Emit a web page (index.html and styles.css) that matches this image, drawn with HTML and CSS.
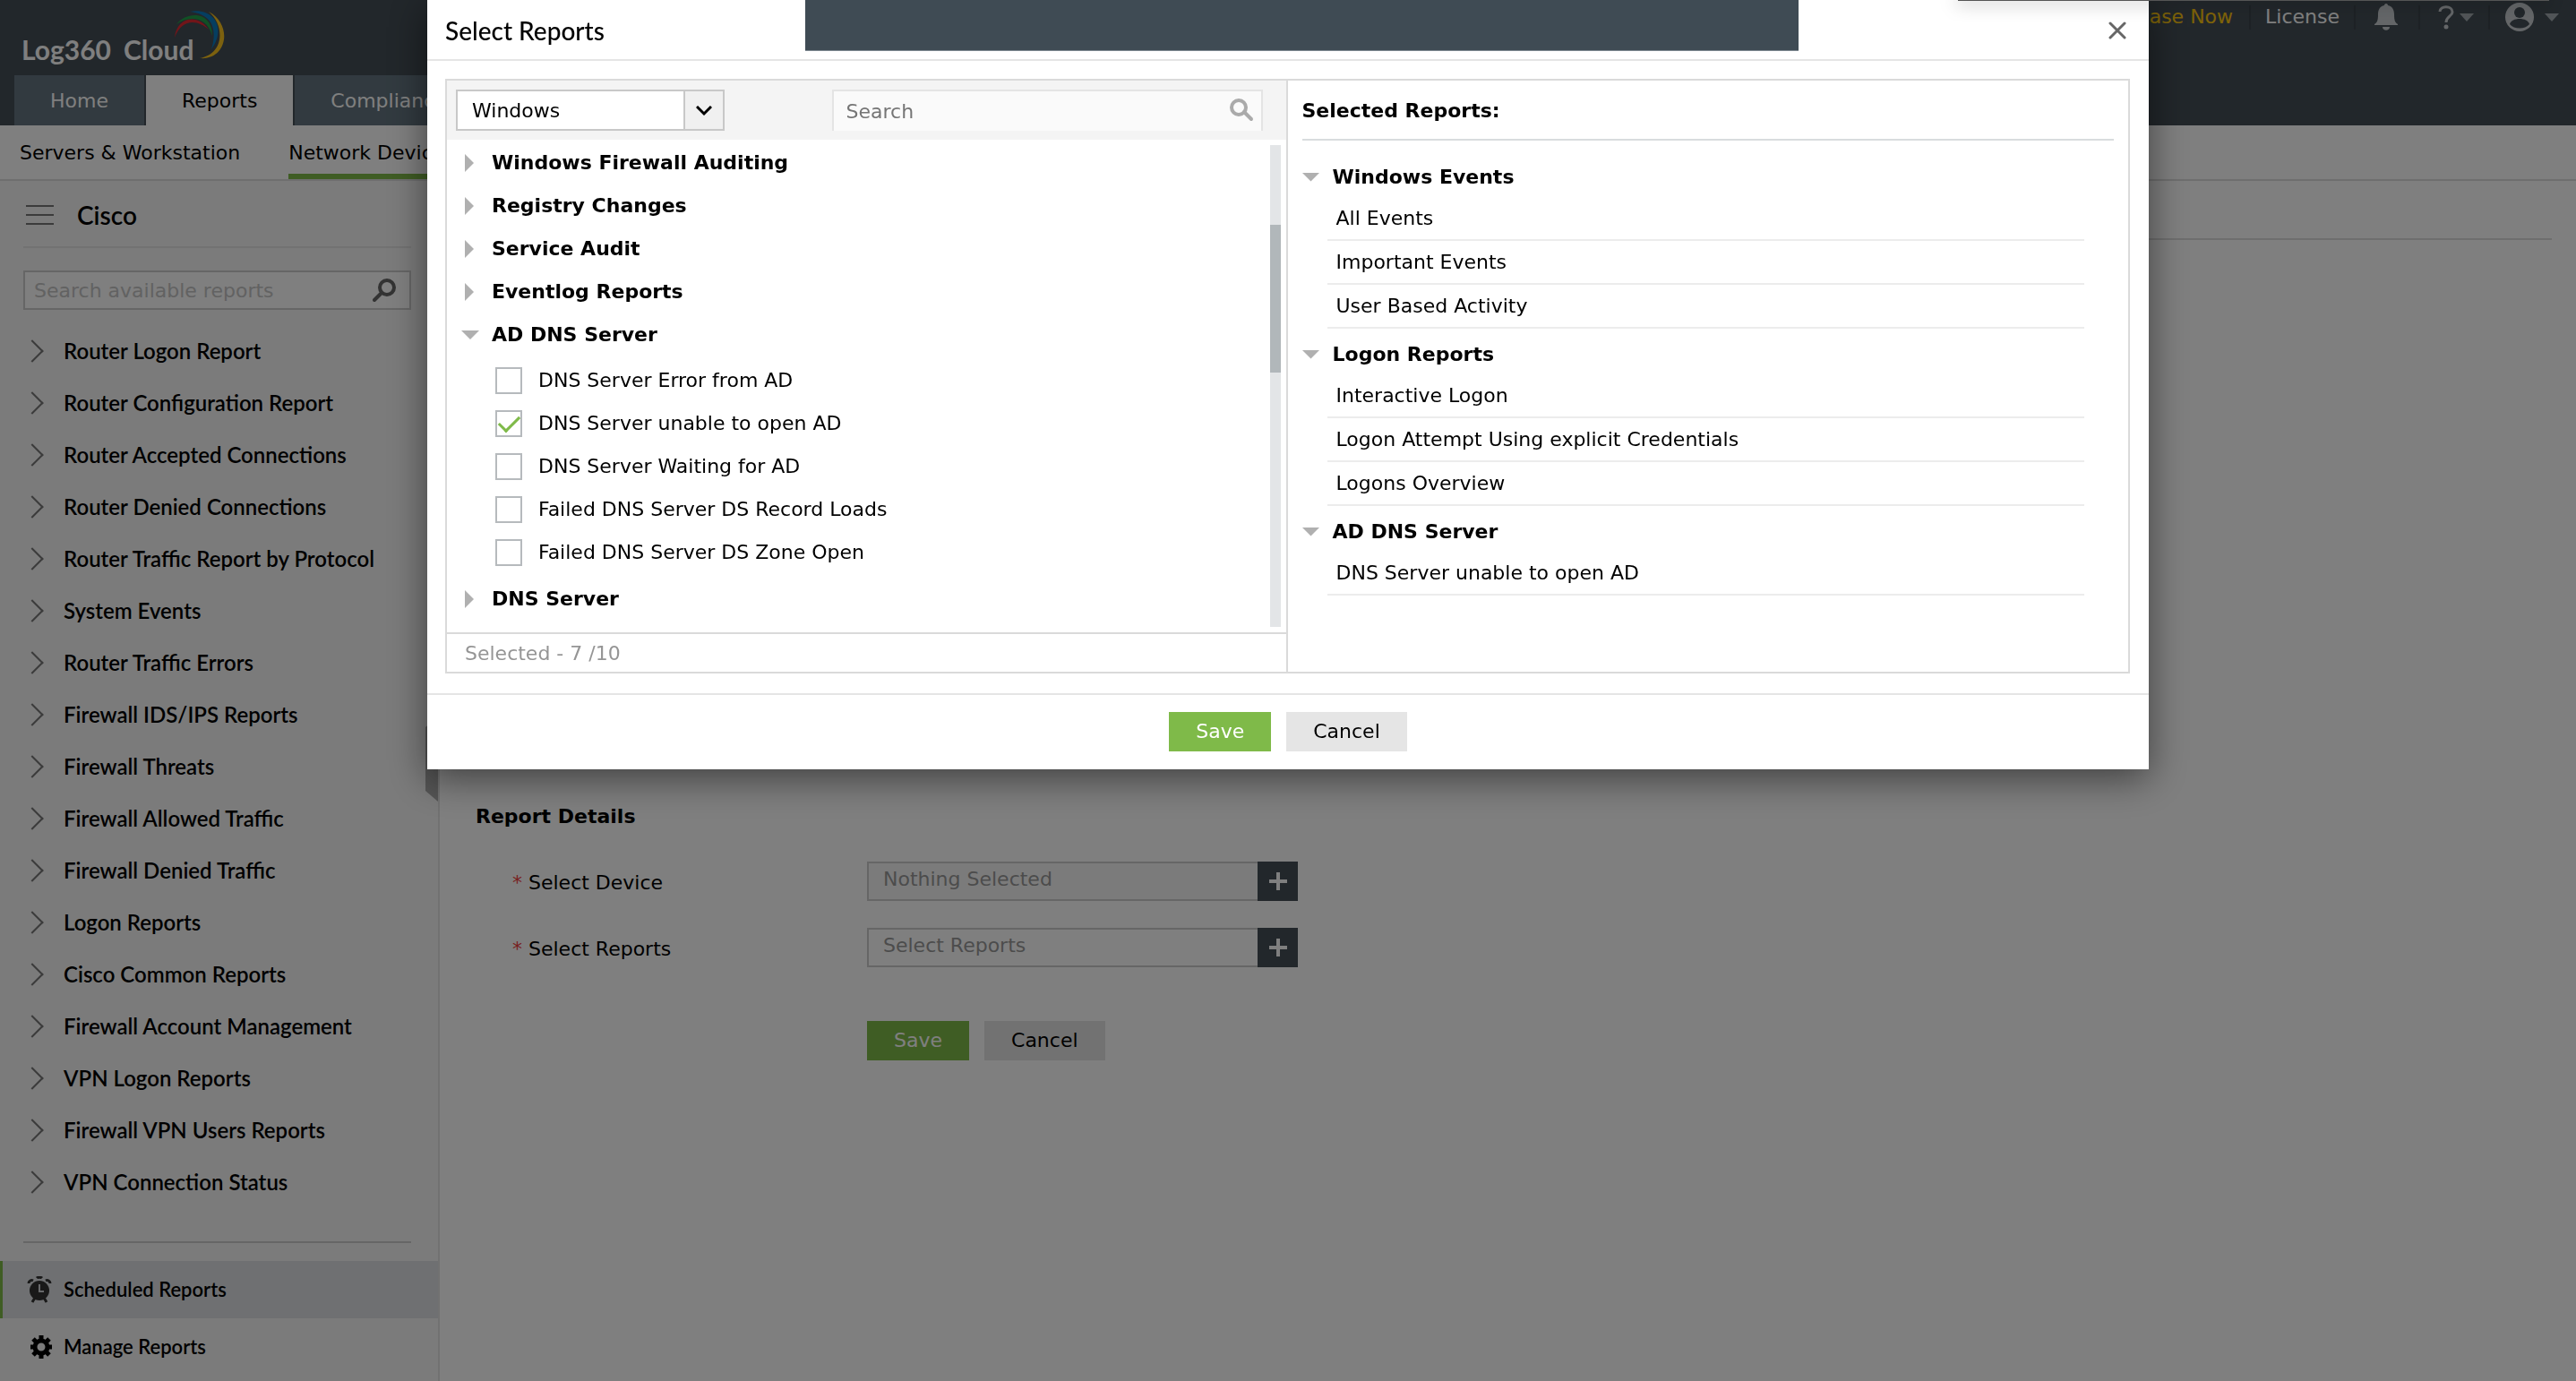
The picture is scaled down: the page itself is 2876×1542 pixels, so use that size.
FILE: index.html
```
<!DOCTYPE html>
<html lang="en">
  <head>
    <meta charset="UTF-8" />
    <meta name="viewport" content="width=device-width, initial-scale=1.0" />
    <title>Log360 Cloud - Scheduled Reports</title>
    <link rel="stylesheet" href="styles.css">
  </head>
  <body>
    <header class="topbar">
      <div class="brand-row">
        <a class="brand" href="#">
          <span>Log360</span>
          <span>Cloud</span>
          <svg class="brand-arc" viewBox="0 0 56 54" aria-hidden="true">
            <path fill="#e22a33" d="M0 30C2 8 25 2 38 21C26 10 8 8 0 30Z" />
            <path fill="#22a04a" d="M2 15C14 0 42 0 42 28C36 6 16 5 2 15Z" />
            <path fill="#0a7cc0" d="M17 1C44 -4 58 20 41 43C48 20 42 4 17 1Z" />
            <path fill="#f9c31f" d="M38 1C66 16 58 56 28 53C56 48 56 16 38 1Z" />
          </svg>
        </a>
        <nav class="user-links">
          <a class="purchase" href="#">Purchase Now</a>
          <a href="#">License</a>
          <button class="icon-btn bell" aria-label="Notifications">
            <svg width="28" height="30" viewBox="0 0 28 30"><path fill="currentColor" d="M14 0c1.500 0 2 1 2 2 5 1 7 5 7 10 0 7 1 9 4 11v1H1v-1c3-2 4-4 4-11 0-5 2-9 7-10 0-1 .5-2 2-2zM10 26h8c0 5-8 5-8 0z" /></svg>
          </button>
          <button class="icon-btn help" aria-label="Help">
            <svg width="18" height="27" viewBox="0 0 18 27"><path fill="none" stroke="currentColor" stroke-width="3" d="M2 7C2 0 16 0 16 7.500C16 12 9 12 9 19" /><circle cx="9" cy="24" r="2.500" fill="currentColor" /></svg>
            <i class="caret"></i>
          </button>
          <button class="icon-btn account" aria-label="Account">
            <svg width="32" height="32" viewBox="0 0 32 32"><circle cx="16" cy="16" r="16" fill="currentColor" /><circle cx="16" cy="11" r="6" fill="#444e56" /><path fill="#444e56" d="M5 24c2-8 20-8 22 0-5 6-17 6-22 0z" /></svg>
            <i class="caret"></i>
          </button>
        </nav>
      </div>
      <nav class="tabs">
        <a href="#">Home</a>
        <a class="active" href="#">Reports</a>
        <a href="#">Compliance</a>
      </nav>
    </header>

    <nav class="subnav">
      <a href="#">Servers &amp; Workstation</a>
      <a class="active" href="#">Network Devices</a>
    </nav>

    <div class="layout">
      <aside class="sidebar">
        <div class="sidebar-head">
          <svg width="31" height="22" viewBox="0 0 31 22"><path stroke="#777" stroke-width="2" d="M0 1h31M0 11h31M0 21h31" /></svg>
          <h2>Cisco</h2>
        </div>
        <div class="sidebar-search">
          <input type="text" aria-label="Search available reports" placeholder="Search available reports" />
          <svg width="27" height="27" viewBox="0 0 27 27"><circle cx="16" cy="10" r="8" fill="none" stroke="#666" stroke-width="4" /><path stroke="#666" stroke-width="4" stroke-linecap="round" d="M10 16L2 24" /></svg>
        </div>
        <ul class="report-list">
          <li><a href="#">Router Logon Report</a></li>
          <li><a href="#">Router Configuration Report</a></li>
          <li><a href="#">Router Accepted Connections</a></li>
          <li><a href="#">Router Denied Connections</a></li>
          <li><a href="#">Router Traffic Report by Protocol</a></li>
          <li><a href="#">System Events</a></li>
          <li><a href="#">Router Traffic Errors</a></li>
          <li><a href="#">Firewall IDS/IPS Reports</a></li>
          <li><a href="#">Firewall Threats</a></li>
          <li><a href="#">Firewall Allowed Traffic</a></li>
          <li><a href="#">Firewall Denied Traffic</a></li>
          <li><a href="#">Logon Reports</a></li>
          <li><a href="#">Cisco Common Reports</a></li>
          <li><a href="#">Firewall Account Management</a></li>
          <li><a href="#">VPN Logon Reports</a></li>
          <li><a href="#">Firewall VPN Users Reports</a></li>
          <li><a href="#">VPN Connection Status</a></li>
        </ul>
        <div class="sidebar-links">
          <a class="active" href="#">
            <svg width="28" height="30" viewBox="0 0 28 30"><circle cx="14" cy="16" r="11" fill="#333" /><path fill="none" stroke="#333" stroke-width="3" d="M2 8c0-3 3-4 5-3M26 8c0-3-3-4-5-3M11 2c1-1 5-1 6 0M9 24l-3 5M19 24l3 5" /><path fill="none" stroke="#d0d3d6" stroke-width="2" d="M14 9v8h5" /></svg>
            Scheduled Reports
          </a>
          <a href="#">
            <svg width="28" height="26" viewBox="0 0 28 26"><circle cx="16" cy="13" r="7" fill="none" stroke="#000" stroke-width="5" /><path stroke="#000" stroke-width="5" d="M16 0v5M16 21v5M4 13h4M24 13h4M7 4l4 4M21 18l4 4M25 4l-4 4M11 18l-4 4" /></svg>
            Manage Reports
          </a>
        </div>
        <span class="collapse-handle"></span>
      </aside>

      <main class="content">
        <div class="content-head"></div>
        <form class="details">
          <h3>Report Details</h3>
          <div class="field">
            <label for="device"><span class="req">*</span> Select Device</label>
            <div class="picker">
              <input id="device" class="muted" type="text" placeholder="Nothing Selected" />
              <button type="button" aria-label="Add device"></button>
            </div>
          </div>
          <div class="field">
            <label for="reports"><span class="req">*</span> Select Reports</label>
            <div class="picker">
              <input id="reports" type="text" placeholder="Select Reports" />
              <button type="button" aria-label="Add reports"></button>
            </div>
          </div>
          <div class="form-actions">
            <button type="button" class="btn btn-save">Save</button>
            <button type="button" class="btn">Cancel</button>
          </div>
        </form>
      </main>
    </div>

    <div class="overlay"></div>

    <div class="modal" role="dialog" aria-labelledby="modal-title">
      <div class="modal-head">
        <h2 id="modal-title">Select Reports</h2>
        <button class="close" aria-label="Close">
          <svg width="20" height="20" viewBox="0 0 20 20"><path stroke="#666" stroke-width="3" stroke-linecap="round" d="M2 2l16 16M18 2L2 18" /></svg>
        </button>
      </div>
      <div class="notice"></div>

      <div class="panels">
        <section class="available">
          <div class="toolbar">
            <div class="select-box">
              <select aria-label="Log source">
                <option>Windows</option>
              </select>
              <svg width="18" height="12" viewBox="0 0 18 12"><path fill="none" stroke="#000" stroke-width="3" d="M1 1l8 8 8-8" /></svg>
            </div>
            <div class="search-box">
              <input type="text" aria-label="Search" placeholder="Search" />
              <svg width="27" height="26" viewBox="0 0 27 26"><circle cx="10" cy="10" r="8" fill="none" stroke="#aaa" stroke-width="4" /><path stroke="#aaa" stroke-width="4" stroke-linecap="round" d="M16 15l8 8" /></svg>
            </div>
          </div>
          <div class="tree-wrap">
            <div class="tree">
              <button class="group">Windows Firewall Auditing</button>
              <button class="group">Registry Changes</button>
              <button class="group">Service Audit</button>
              <button class="group">Eventlog Reports</button>
              <button class="group open">AD DNS Server</button>
              <div class="checks">
                <label><input type="checkbox" /> DNS Server Error from AD</label>
                <label><input type="checkbox" checked /> DNS Server unable to open AD</label>
                <label><input type="checkbox" /> DNS Server Waiting for AD</label>
                <label><input type="checkbox" /> Failed DNS Server DS Record Loads</label>
                <label><input type="checkbox" /> Failed DNS Server DS Zone Open</label>
              </div>
              <button class="group">DNS Server</button>
            </div>
            <div class="scrollbar"><div class="thumb"></div></div>
          </div>
          <div class="count">Selected - 7 /10</div>
        </section>

        <section class="selected">
          <h3>Selected Reports:</h3>
          <div class="picked">
            <button class="group open">Windows Events</button>
            <ul>
              <li>All Events</li>
              <li>Important Events</li>
              <li>User Based Activity</li>
            </ul>
            <button class="group open">Logon Reports</button>
            <ul>
              <li>Interactive Logon</li>
              <li>Logon Attempt Using explicit Credentials</li>
              <li>Logons Overview</li>
            </ul>
            <button class="group open">AD DNS Server</button>
            <ul>
              <li>DNS Server unable to open AD</li>
            </ul>
          </div>
        </section>
      </div>

      <div class="modal-foot">
        <button class="btn btn-save">Save</button>
        <button class="btn">Cancel</button>
      </div>
    </div>

    <div class="top-popup"></div>
  </body>
</html>
```

FILE: styles.css
```
* {
  box-sizing: border-box;
}

body {
  margin: 0;
  min-height: 100vh;
  display: flex;
  flex-direction: column;
  font-family: Verdana, "DejaVu Sans", sans-serif;
  font-size: 22px;
  line-height: 28px;
  color: #000;
  background: #fff;
}

a {
  color: inherit;
  text-decoration: none;
}

button,
input,
select {
  font: inherit;
  color: inherit;
  border: 0;
  margin: 0;
  padding: 0;
  background: none;
  border-radius: 0;
}

h2,
h3,
ul {
  margin: 0;
  padding: 0;
}

h3 {
  font-size: 22px;
}

ul {
  list-style: none;
}

svg {
  display: block;
  flex: none;
}

/* top bar */
.topbar {
  background: #444e56;
  color: #fff;
}

.brand-row {
  display: flex;
  justify-content: space-between;
  align-items: flex-start;
  height: 84px;
}

.brand {
  position: relative;
  display: flex;
  gap: 14px;
  padding: 39px 0 0 24px;
  font-family: Lato, sans-serif;
  font-size: 30px;
  font-weight: 700;
  line-height: 32px;
}

.brand-arc {
  position: absolute;
  left: 195px;
  top: 12px;
  width: 56px;
  height: 54px;
}

.user-links {
  display: flex;
  align-items: center;
  height: 38px;
  padding-right: 19px;
}

.user-links > * {
  display: flex;
  align-items: center;
  height: 27px;
  padding: 0 16px;
}

.user-links > * + * {
  border-left: 2px solid #3a434a;
}

.user-links .purchase {
  padding-right: 18px;
  color: #fdc610;
}

.user-links .bell {
  padding: 0 22px 0 20px;
}

.user-links .help {
  padding: 0 16px 0 20px;
  gap: 6px;
}

.user-links .account {
  padding: 0 0 0 17px;
  gap: 12px;
}

.icon-btn {
  color: #c8cdd1;
}

.caret {
  border: 8px solid transparent;
  border-top: 9px solid #a3aab0;
  border-bottom: 0;
}

.tabs {
  display: flex;
  gap: 2px;
  padding-left: 16px;
}

.tabs a {
  padding: 15px 40px 13px;
  background: #647580;
  color: #fff;
}

.tabs .active {
  background: #fff;
  color: #000;
}

.subnav {
  display: flex;
  gap: 54px;
  padding-left: 22px;
  border-bottom: 2px solid #ddd;
}

.subnav a {
  padding: 17px 0 9px;
  border-bottom: 6px solid transparent;
}

.subnav .active {
  border-color: #7fba49;
}

.layout {
  flex: 1;
  display: flex;
}

/* sidebar */
.sidebar {
  position: relative;
  flex: none;
  width: 491px;
  background: #f7f7f7;
  border-right: 2px solid #e2e2e2;
  font-family: Lato, sans-serif;
  font-size: 24px;
  font-weight: 600;
}

.sidebar-head {
  display: flex;
  align-items: center;
  gap: 26px;
  height: 75px;
  margin: 0 30px 0 26px;
  padding: 2px 0 0 3px;
  border-bottom: 2px solid #e4e4e4;
}

.sidebar-head h2 {
  font-size: 28px;
  font-weight: 600;
}

.sidebar-search {
  display: flex;
  align-items: center;
  height: 44px;
  margin: 25px 30px 17px 26px;
  padding: 0 14px 0 10px;
  border: 2px solid #ccc;
  background: #fff;
}

.sidebar-search input {
  flex: 1;
  min-width: 0;
  padding-top: 2px;
  outline: 0;
  font-family: Verdana, "DejaVu Sans", sans-serif;
  font-size: 22px;
  font-weight: 400;
}

.sidebar-search input::placeholder {
  color: #c4c4c4;
}

.report-list a {
  display: flex;
  align-items: center;
  gap: 26px;
  height: 58px;
  padding-left: 27px;
}

.report-list a::before {
  content: "";
  width: 16px;
  height: 16px;
  border: solid #777;
  border-width: 2px 2px 0 0;
  transform: rotate(45deg);
}

.sidebar-links {
  margin-top: 37px;
  font-size: 22px;
}

.sidebar-links::before {
  content: "";
  display: block;
  margin: 0 30px 20px 26px;
  border-top: 2px solid #ccc;
}

.sidebar-links a {
  display: flex;
  align-items: center;
  gap: 13px;
  height: 64px;
  padding-left: 27px;
  border-left: 3px solid transparent;
}

.sidebar-links .active {
  background: #dee1e4;
  border-color: #7fba49;
}

.collapse-handle {
  position: absolute;
  right: 0;
  top: 598px;
  width: 14px;
  height: 95px;
  background: #aaa;
  clip-path: polygon(100% 0, 100% 100%, 0 83px, 0 12px);
}

/* schedule form */
.content {
  flex: 1;
  padding: 0 27px 0 40px;
}

.content-head {
  height: 66px;
  border-bottom: 2px solid #ddd;
}

.details {
  padding-top: 630px;
}

.field {
  display: flex;
  align-items: center;
  height: 44px;
  margin-top: 30px;
}

.details h3 + .field {
  margin-top: 36px;
}

.field label {
  width: 437px;
  padding: 4px 0 0 41px;
}

.req {
  color: #f04040;
}

.picker {
  display: flex;
  width: 481px;
  height: 44px;
}

.picker input {
  flex: 1;
  min-width: 0;
  padding: 0 16px 4px;
  border: 2px solid #ccc;
  border-right: 0;
  outline: 0;
}

.picker .muted {
  background: #f7f7f7;
}

.picker input::placeholder {
  color: #999;
}

.picker button {
  width: 45px;
  background:
    linear-gradient(#fff, #fff) center / 20px 4px no-repeat,
    linear-gradient(#fff, #fff) center / 4px 20px no-repeat,
    #444e56;
}

.form-actions {
  display: flex;
  gap: 17px;
  padding: 60px 0 0 437px;
}

.btn {
  height: 44px;
  padding: 0 30px;
  background: #e5e5e5;
}

.btn-save {
  background: #7fba49;
  color: #fff;
}

.overlay {
  position: fixed;
  inset: 0;
  background: rgba(0, 0, 0, 0.5);
}

/* report picker dialog */
.modal {
  position: fixed;
  top: 0;
  left: 50%;
  width: 1922px;
  max-width: 100%;
  transform: translateX(-50%);
  background: #fff;
  box-shadow: 0 10px 40px rgba(0, 0, 0, 0.5);
}

.modal-head {
  display: flex;
  justify-content: space-between;
  align-items: center;
  height: 68px;
  padding: 2px 25px 0 20px;
  border-bottom: 2px solid #e5e5e5;
}

.modal-head h2 {
  font-family: Lato, sans-serif;
  font-size: 28px;
  font-weight: 500;
}

.notice {
  position: absolute;
  top: 0;
  left: 422px;
  right: 391px;
  height: 57px;
  background: #3f4b54;
  border-bottom: 1px solid #7d8890;
}

.panels {
  display: flex;
  margin: 20px 21px 22px 20px;
  border: 2px solid #dadada;
}

.available {
  flex: none;
  width: 50%;
  display: flex;
  flex-direction: column;
  border-right: 2px solid #dadada;
}

.toolbar {
  display: flex;
  justify-content: space-between;
  padding: 10px 26px 10px 10px;
  background: #f4f4f4;
}

.select-box {
  position: relative;
  width: 300px;
}

.select-box select {
  appearance: none;
  width: 100%;
  height: 46px;
  padding: 2px 0 0 16px;
  border: 2px solid #c8c8c8;
  outline: 0;
  background: linear-gradient(90deg, #c8c8c8 2px, #f0f0f0 2px) right / 44px 100% no-repeat #fff;
}

.select-box svg {
  position: absolute;
  right: 14px;
  top: 18px;
  pointer-events: none;
}

.search-box {
  display: flex;
  align-items: center;
  width: 481px;
  height: 46px;
  padding: 0 8px 0 14px;
  background: #fafafa;
  border: 2px solid #e4e4e4;
  border-bottom: 0;
}

.search-box input {
  flex: 1;
  min-width: 0;
  padding-top: 2px;
  outline: 0;
}

.search-box input::placeholder {
  color: #757575;
}

.search-box svg {
  margin-bottom: 2px;
}

.tree-wrap {
  flex: 1;
  display: flex;
  gap: 20px;
  padding: 6px 6px 6px 16px;
}

.tree {
  flex: 1;
  margin-top: -4px;
  padding-bottom: 7px;
}

.group {
  display: flex;
  align-items: center;
  width: 100%;
  height: 48px;
  font-weight: 700;
}

.group::before {
  content: "";
  width: 10px;
  height: 20px;
  margin: 0 20px 0 4px;
  background: #b0b0b0;
  clip-path: polygon(0 0, 100% 50%, 0 100%);
}

.group.open::before {
  width: 20px;
  height: 10px;
  margin: 0 14px 0 0;
  clip-path: polygon(0 0, 100% 0, 50% 100%);
}

.checks {
  padding: 3px 0 4px 38px;
}

.checks label {
  display: flex;
  align-items: center;
  gap: 18px;
  height: 48px;
}

.checks input {
  appearance: none;
  display: grid;
  place-items: center;
  width: 30px;
  height: 30px;
  border: 2px solid #b6babd;
}

.checks input:checked::before {
  content: "";
  width: 20px;
  height: 10px;
  margin-bottom: 6px;
  border: solid #7fba49;
  border-width: 0 0 3px 3px;
  transform: rotate(-45deg);
}

.scrollbar {
  width: 12px;
  padding-top: 89px;
  background: #e3e5e7;
}

.thumb {
  height: 165px;
  background: #b1b7ba;
}

.count {
  height: 44px;
  padding: 8px 20px;
  border-top: 2px solid #dadada;
  color: #959595;
}

.selected {
  flex: 1;
  padding: 20px 16px 0;
}

.selected h3 {
  padding-bottom: 17px;
  border-bottom: 2px solid #d9dcde;
}

.picked {
  margin-top: 12px;
}

.picked .group {
  height: 51px;
  padding-top: 6px;
}

.picked ul {
  margin: 0 33px 0 28px;
}

.picked li {
  height: 49px;
  padding: 10px 10px 0;
  border-bottom: 2px solid #ececec;
}

.modal-foot {
  display: flex;
  justify-content: center;
  gap: 17px;
  padding: 19px 0 20px;
  border-top: 2px solid #e5e5e5;
}

/* lower edge of the menu docked above the page */
.top-popup {
  position: fixed;
  top: 0;
  left: 76%;
  right: 30px;
  height: 1px;
  background: #555;
  box-shadow: 0 0 20px 2px rgba(0, 0, 0, 0.4);
}
```
